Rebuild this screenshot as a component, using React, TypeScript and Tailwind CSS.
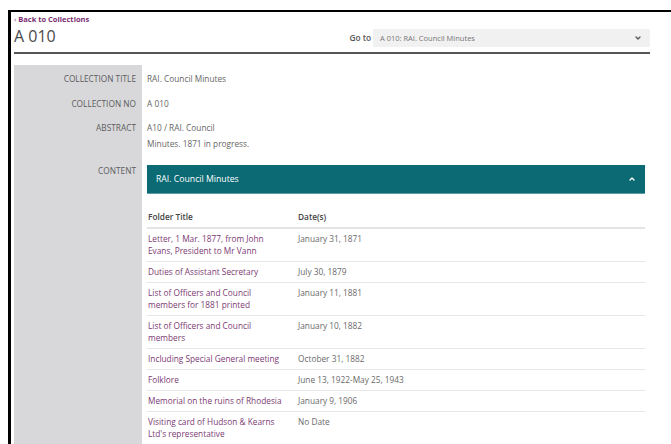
import { ChevronDown, ChevronUp } from 'lucide-react';

interface Folder {
  title: string[];
  date: string;
}

const folders: Folder[] = [
  { title: ['Letter, 1 Mar. 1877, from John', 'Evans, President to Mr Vann'], date: 'January 31, 1871' },
  { title: ['Duties of Assistant Secretary'], date: 'July 30, 1879' },
  { title: ['List of Officers and Council', 'members for 1881 printed'], date: 'January 11, 1881' },
  { title: ['List of Officers and Council', 'members'], date: 'January 10, 1882' },
  { title: ['Including Special General meeting'], date: 'October 31, 1882' },
  { title: ['Folklore'], date: 'June 13, 1922-May 25, 1943' },
  { title: ['Memorial on the ruins of Rhodesia'], date: 'January 9, 1906' },
  { title: ["Visiting card of Hudson & Kearns", "Ltd's representative"], date: 'No Date' },
];

function Label({ children, className = '' }: { children: React.ReactNode; className?: string }) {
  return (
    <div className={`w-[128px] shrink-0 bg-[#d8d8db] pr-[6px] text-right uppercase text-[#5c5c5c] ${className}`}>
      {children}
    </div>
  );
}

export default function App() {
  return (
    <div
      className="h-[444px] w-[671px] overflow-hidden bg-white pl-[8px] pt-[10px] text-[8.3px] leading-[16px]"
      style={{ fontFamily: '"Open Sans", "Noto Sans", sans-serif' }}
    >
      <div className="h-full border-l-[3px] border-t-2 border-black pl-[3px] pr-[21px]">
        {/* header */}
        <div className="flex h-[40px] justify-between">
          <div className="flex flex-col">
            <a className="mt-[3px] text-[7.5px] font-bold leading-[9px] text-[#7b2d72]">
              <span className="font-normal">‹</span> Back to Collections
            </a>
            <h1 className="mt-[2px] text-[16px] leading-[20px] text-[#4a4a4a]">A 010</h1>
          </div>
          <div className="flex items-center self-end pb-[5px]">
            <span className="mr-[2px] font-semibold text-[#555]">Go to</span>
            <div className="flex h-[18px] w-[277px] items-center justify-between bg-[#f1f1f1] pl-[7px] pr-[8px]">
              <span className="text-[7.5px] text-[#777]">A 010: RAI. Council Minutes</span>
              <ChevronDown size={8} strokeWidth={4} className="text-[#555]" />
            </div>
          </div>
        </div>
        <div className="h-[2px] bg-[#555]" />

        {/* record fields */}
        <div className="mt-[11px]">
          <div className="flex">
            <Label className="pb-[3px] pt-[6px]">Collection Title</Label>
            <div className="pb-[3px] pl-[5px] pt-[6px] text-[#666]">RAI. Council Minutes</div>
          </div>
          <div className="flex">
            <Label className="pb-[3px] pt-[6px]">Collection No</Label>
            <div className="pb-[3px] pl-[5px] pt-[6px] text-[#666]">A 010</div>
          </div>
          <div className="flex">
            <Label className="pb-[3px] pt-[5px]">Abstract</Label>
            <div className="pb-[3px] pl-[5px] pt-[5px] text-[#666]">
              <div>A10 / RAI. Council</div>
              <div>Minutes. 1871 in progress.</div>
            </div>
          </div>
          <div className="flex">
            <Label className="pt-[8px]">Content</Label>
            <div className="flex-1 pl-[5px] pr-[6px] pt-[10px]">
              <div className="flex h-[29px] items-center justify-between border-b border-[#5a9da3] bg-[#0b6a74] pl-[9px] pr-[9px] text-[8.7px] text-white">
                <span>RAI. Council Minutes</span>
                <ChevronUp size={8} strokeWidth={4} />
              </div>
              <table className="mt-[10px] w-[498px] border-collapse">
                <thead>
                  <tr className="border-b-2 border-[#e4e4e4] text-left text-[#444]">
                    <th className="w-[151px] pb-[4px] pl-[1px] pt-[7px] font-semibold leading-[12px]">Folder Title</th>
                    <th className="pb-[4px] pt-[7px] font-semibold leading-[12px]">Date(s)</th>
                  </tr>
                </thead>
                <tbody>
                  {folders.map((f) => (
                    <tr key={f.title.join(' ') + f.date} className="border-b border-[#e6e6e6] align-top">
                      <td className="py-[4px] pl-[1px] leading-[12px] text-[#7d3a74]">
                        {f.title.map((line) => (
                          <div key={line}>{line}</div>
                        ))}
                      </td>
                      <td className="py-[4px] leading-[12px] text-[#6a6a6a]">{f.date}</td>
                    </tr>
                  ))}
                </tbody>
              </table>
            </div>
          </div>
        </div>
      </div>
    </div>
  );
}
